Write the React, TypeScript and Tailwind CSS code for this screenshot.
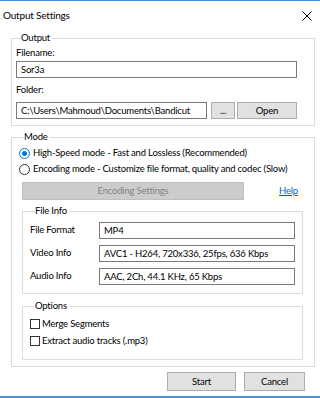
import React from 'react';

function Field({ value, className = '' }: { value: string; className?: string }) {
  return (
    <div
      className={`flex h-[17px] min-w-0 items-center whitespace-nowrap border border-[#7a7a7a] bg-white px-[4px] text-[9.5px] leading-none text-black ${className}`}
    >
      {value}
    </div>
  );
}

function Btn({ label, className = '' }: { label: string; className?: string }) {
  return (
    <div
      className={`flex shrink-0 items-center justify-center border border-[#adadad] bg-[#e1e1e1] text-[9.5px] leading-none text-black ${className}`}
    >
      {label}
    </div>
  );
}

function Group({
  title,
  className = '',
  children,
}: {
  title: string;
  className?: string;
  children: React.ReactNode;
}) {
  return (
    <fieldset className={`min-w-0 shrink-0 border border-[#dcdcdc] ${className}`}>
      <legend className="ml-[5px] pr-[2px] text-[9.5px] leading-[14px] text-black">{title}</legend>
      {children}
    </fieldset>
  );
}

export default function App() {
  return (
    <div
      className="flex h-[398px] w-[320px] flex-col overflow-hidden border-t border-[#3c8ee6] bg-white tracking-[-0.2px] text-black"
      style={{ fontFamily: 'Lato, "Liberation Sans", sans-serif' }}
    >
      {/* title bar */}
      <div className="flex h-[29px] shrink-0 items-center justify-between pl-[3px] pr-[6px]">
        <span className="text-[10px]">Output Settings</span>
        <svg width="10" height="10" viewBox="0 0 10 10" className="mr-[2px]">
          <path d="M0.5 0.5 L9.5 9.5 M9.5 0.5 L0.5 9.5" stroke="#000" strokeWidth="1" />
        </svg>
      </div>

      <div className="flex flex-1 flex-col whitespace-nowrap pl-[11px] pr-[5px]">
        <Group title="Output" className="mt-[1px] px-[4px] pb-[6px] pt-[1px]">
          <div className="text-[9.5px] leading-[14px]">Filename:</div>
          <Field value="Sor3a" className="mr-[13px] mt-[1px]" />
          <div className="mt-[5px] text-[9.5px] leading-[14px]">Folder:</div>
          <div className="mr-[13px] mt-[5px] flex gap-[4px]">
            <Field value="C:\Users\Mahmoud\Documents\Bandicut" className="flex-1" />
            <Btn label="..." className="h-[17px] w-[24px]" />
            <Btn label="Open" className="-ml-[2px] h-[17px] w-[60px]" />
          </div>
        </Group>

        <Group title="Mode" className="mt-[4px] px-[7px] pb-[6px] pt-[2px]">
          <div className="flex items-center gap-[3px] text-[9.5px] leading-[14px]">
            <span className="flex h-[11px] w-[11px] shrink-0 items-center justify-center rounded-full border border-[#0078d7] bg-white">
              <span className="h-[5px] w-[5px] rounded-full bg-[#0078d7]" />
            </span>
            High-Speed mode - Fast and Lossless (Recommended)
          </div>
          <div className="mt-[2px] flex items-center gap-[3px] text-[9.5px] leading-[14px]">
            <span className="h-[11px] w-[11px] shrink-0 rounded-full border border-[#333] bg-white" />
            Encoding mode - Customize file format, quality and codec (Slow)
          </div>
          <div className="mt-[6px] flex items-center">
            <div className="ml-[3px] flex h-[18px] w-[222px] items-center justify-center border border-[#bfbfbf] bg-[#cccccc] text-[9.5px] text-[#838383]">
              Encoding Settings
            </div>
            <span className="ml-[35px] text-[9.5px] text-[#0066cc] underline">Help</span>
          </div>

          <Group title="File Info" className="ml-[3px] mr-[4px] mt-[4px] px-[7px] pb-[8px] pt-[4px]">
            {[
              ['File Format', 'MP4'],
              ['Video Info', 'AVC1 - H264, 720x336, 25fps, 636 Kbps'],
              ['Audio Info', 'AAC, 2Ch, 44.1 KHz, 65 Kbps'],
            ].map(([label, value], i) => (
              <div key={label} className={`flex items-center ${i > 0 ? 'mt-[6px]' : ''}`}>
                <span className="w-[69px] shrink-0 text-[9.5px]">{label}</span>
                <Field value={value} className="flex-1" />
              </div>
            ))}
          </Group>

          <Group title="Options" className="ml-[3px] mr-[4px] mt-[5px] px-[7px] pb-[11px] pt-[4px]">
            {['Merge Segments', 'Extract audio tracks (.mp3)'].map((t, i) => (
              <div
                key={t}
                className={`flex items-center gap-[2px] text-[9.5px] leading-[14px] ${i > 0 ? 'mt-[3px]' : ''}`}
              >
                <span className="h-[10px] w-[10px] shrink-0 border border-[#333] bg-white" />
                {t}
              </div>
            ))}
          </Group>
        </Group>

        <div className="flex shrink-0 justify-end gap-[8px] pr-[10px] pt-[5px]">
          <Btn label="Start" className="h-[19px] w-[69px] border-[#0078d7]" />
          <Btn label="Cancel" className="h-[19px] w-[61px]" />
        </div>
      </div>
      <div className="h-[2px] shrink-0 bg-[#4a90d9]" />
    </div>
  );
}
